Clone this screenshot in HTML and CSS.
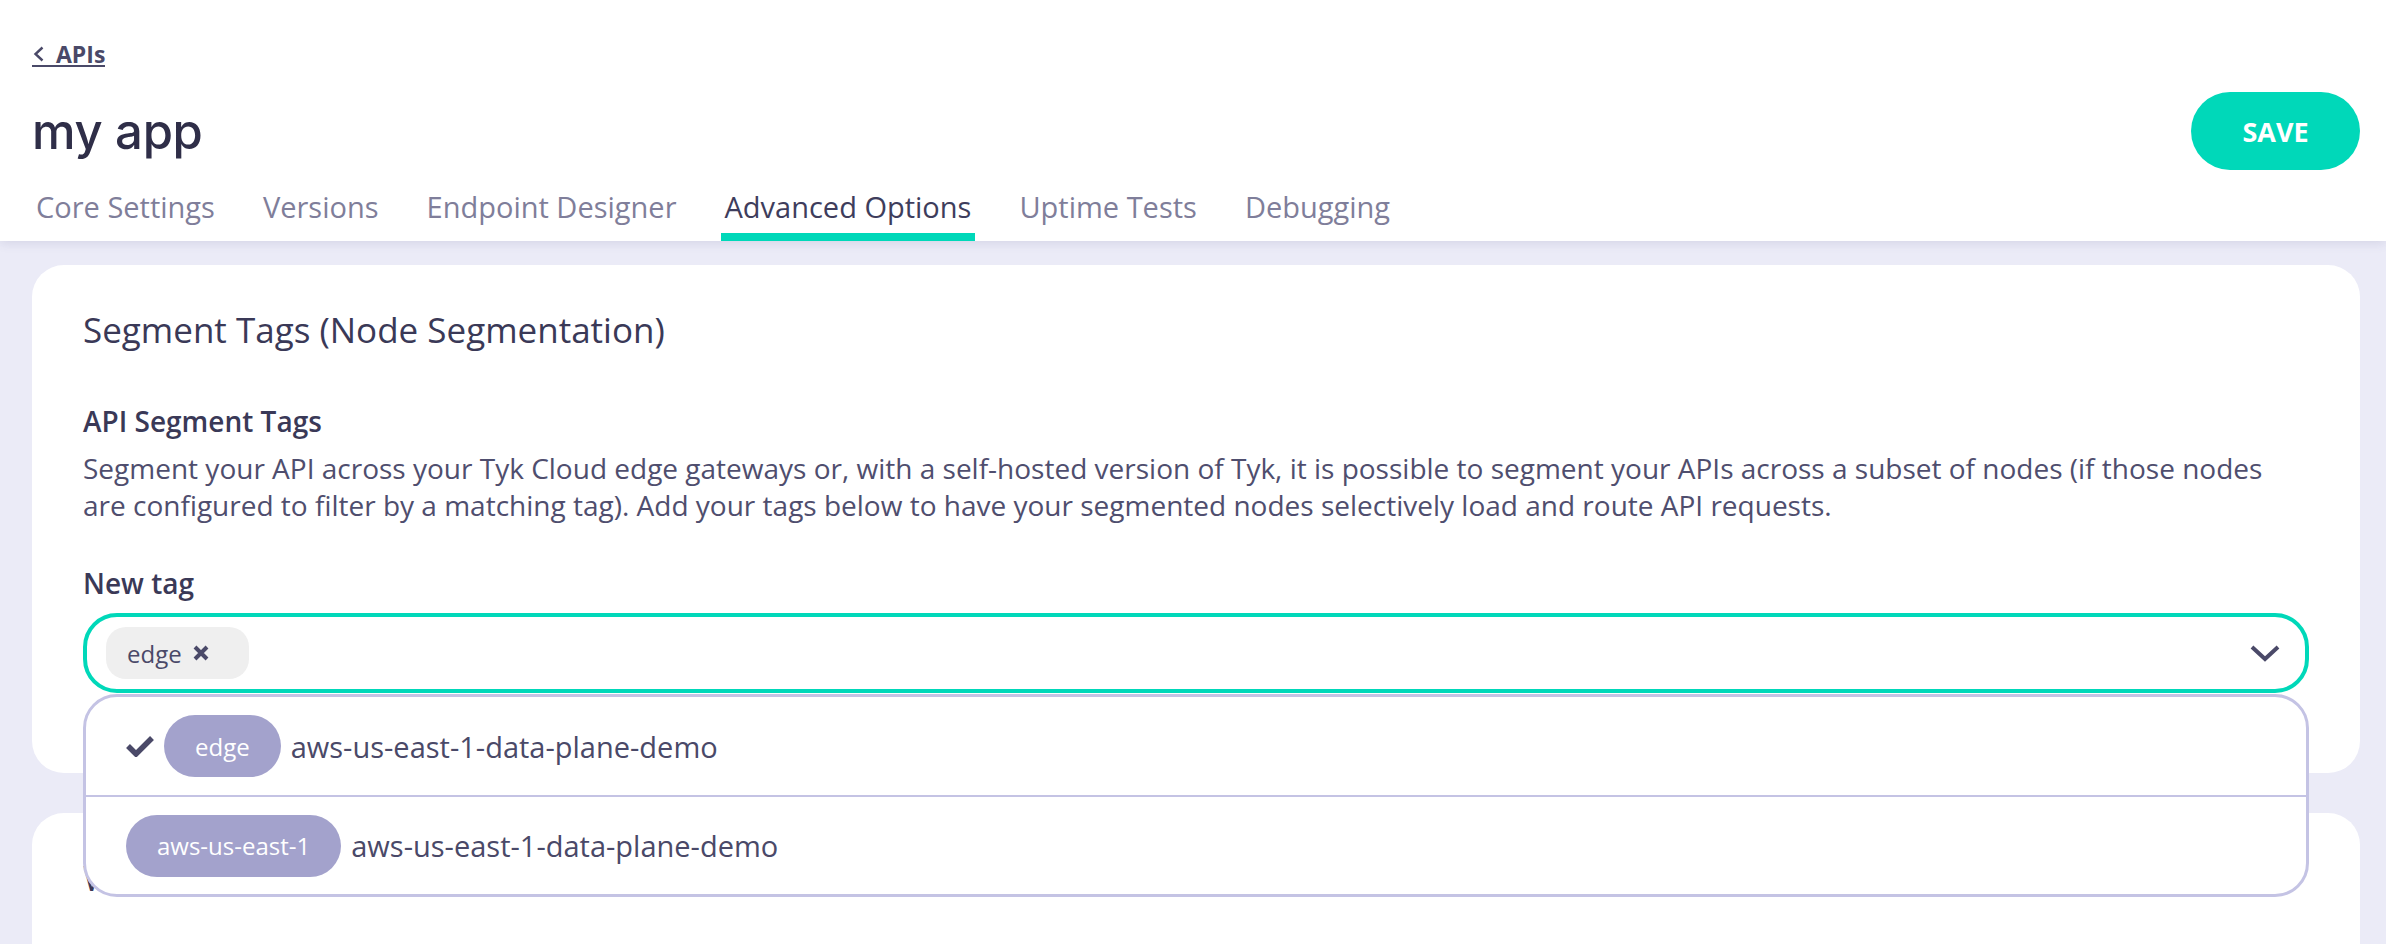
FILE: index.html
```html
<!DOCTYPE html>
<html lang="en">
<head>
  <meta charset="UTF-8">
  <title>my app · Advanced Options</title>
  <link rel="stylesheet" href="styles.css">
</head>
<body>

<header class="page-header">
  <a class="back-link" href="#">
    <svg width="14" height="18" viewBox="0 0 14 18"><path d="M10.5 2.5 L3.5 9 L10.5 15.5" fill="none" stroke="currentColor" stroke-width="2.4"/></svg>
    APIs
  </a>
  <div class="title-row">
    <h1 class="app-name">my app</h1>
    <button class="btn-save">SAVE</button>
  </div>
  <nav class="tabs">
    <a class="tab" href="#">Core Settings</a>
    <a class="tab" href="#">Versions</a>
    <a class="tab" href="#">Endpoint Designer</a>
    <a class="tab active" href="#">Advanced Options</a>
    <a class="tab" href="#">Uptime Tests</a>
    <a class="tab" href="#">Debugging</a>
  </nav>
</header>

<main class="content">
  <section class="card">
    <h2 class="card-title">Segment Tags (Node Segmentation)</h2>
    <h3 class="field-title">API Segment Tags</h3>
    <p class="field-help">Segment your API across your Tyk Cloud edge gateways or, with a self-hosted version of Tyk, it is possible to segment your APIs across a subset of nodes (if those nodes are configured to filter by a matching tag). Add your tags below to have your segmented nodes selectively load and route API requests.</p>
    <label class="field-label">New tag</label>

    <div class="tag-select">
      <div class="tag-input">
        <span class="chip">edge
          <svg width="16" height="16" viewBox="0 0 16 16"><path d="M2 2 L14 14 M14 2 L2 14" stroke="currentColor" stroke-width="4"/></svg>
        </span>
        <svg class="caret" width="30" height="18" viewBox="0 0 30 18"><path d="M2 3 L15 15 L28 3" fill="none" stroke="currentColor" stroke-width="4"/></svg>
      </div>
      <ul class="tag-options">
        <li class="tag-option">
          <svg class="check" width="28" height="22" viewBox="0 0 28 22"><path d="M2 11 L10 19 L26 3" fill="none" stroke="currentColor" stroke-width="5.5"/></svg>
          <span class="pill">edge</span>
          <span class="option-name">aws-us-east-1-data-plane-demo</span>
        </li>
        <li class="tag-option">
          <span class="pill">aws-us-east-1</span>
          <span class="option-name">aws-us-east-1-data-plane-demo</span>
        </li>
      </ul>
    </div>
  </section>

  <section class="card">
    <h2 class="card-title">Webhooks</h2>
  </section>
</main>

</body>
</html>
```

FILE: styles.css
```css
body {
  margin: 0;
  background: #ebebf7;
  font-family: 'Open Sans', sans-serif;
  color: #4a4968;
}

/* header */
.page-header {
  background: #fff;
  padding: 43px 26px 0 32px;
  box-shadow: 0 2px 10px rgba(70, 70, 130, 0.14);
  position: relative;
  z-index: 1;
}
.back-link {
  display: inline-flex;
  align-items: center;
  gap: 10px;
  font-size: 23px;
  line-height: 22px;
  font-weight: 700;
  color: #4a4968;
  text-decoration: none;
  border-bottom: 2px solid #4a4968;
}
.title-row {
  display: flex;
  align-items: center;
  justify-content: space-between;
  margin-top: 24px;
}
.app-name {
  margin: 0;
  font-family: Inter, sans-serif;
  font-size: 49px;
  font-weight: 500;
  color: #2f2e48;
  letter-spacing: -0.3px;
}
.btn-save {
  width: 169px;
  height: 78px;
  border: none;
  border-radius: 39px;
  background: #00d8b9;
  color: #fff;
  font-family: 'Open Sans', sans-serif;
  font-size: 27px;
  font-weight: 700;
  cursor: pointer;
}
.tabs {
  display: flex;
  gap: 40px;
  margin-top: 19px;
}
.tab {
  padding: 0 4px 8px;
  border-bottom: 8px solid transparent;
  font-size: 29px;
  line-height: 36px;
  color: #7f7e9a;
  text-decoration: none;
}
.tab.active {
  color: #3e3d5c;
  border-bottom-color: #00d8b9;
}

/* cards */
.content {
  padding: 24px 26px 0 32px;
}
.card {
  background: #fff;
  border-radius: 32px;
  padding: 43px 51px 80px;
  margin-bottom: 40px;
}
.card-title {
  margin: 0;
  font-size: 35px;
  line-height: 44px;
  font-weight: 400;
  color: #3a3957;
}
.field-title {
  margin: 51px 0 0;
  font-size: 28px;
  line-height: 36px;
  font-weight: 600;
  color: #3a3957;
}
.field-help {
  margin: 11px 0 0;
  font-size: 28px;
  line-height: 37px;
  color: #4f4e6e;
}
.field-label {
  display: block;
  margin-top: 41px;
  font-size: 28px;
  line-height: 36px;
  font-weight: 600;
  color: #3a3957;
}

/* tag picker */
.tag-select {
  position: relative;
  margin-top: 12px;
}
.tag-input {
  display: flex;
  align-items: center;
  justify-content: space-between;
  box-sizing: border-box;
  height: 80px;
  padding: 0 25px 0 19px;
  border: 4px solid #00d8b9;
  border-radius: 34px;
}
.chip {
  display: inline-flex;
  align-items: center;
  gap: 11px;
  height: 52px;
  padding: 0 40px 0 21px;
  border-radius: 20px;
  background: #efefef;
  font-size: 24px;
}
.caret {
  color: #4a4968;
}
.tag-options {
  position: absolute;
  top: calc(100% + 1px);
  left: 0;
  right: 0;
  margin: 0;
  padding: 0;
  list-style: none;
  background: #fff;
  border: 3px solid #c4c3e4;
  border-radius: 34px;
  overflow: hidden;
  z-index: 2;
}
.tag-option {
  display: flex;
  align-items: center;
  gap: 10px;
  height: 98px;
  padding: 0 40px;
  box-sizing: border-box;
}
.tag-option + .tag-option {
  border-top: 2px solid #c4c3e4;
  height: 99px;
}
.check {
  color: #4a4968;
}
.pill {
  display: inline-flex;
  align-items: center;
  height: 62px;
  padding: 0 31px;
  border-radius: 31px;
  background: #a3a2cc;
  color: #fff;
  font-size: 24px;
}
.option-name {
  font-size: 29px;
  font-weight: 500;
  color: #4a4968;
}
```
